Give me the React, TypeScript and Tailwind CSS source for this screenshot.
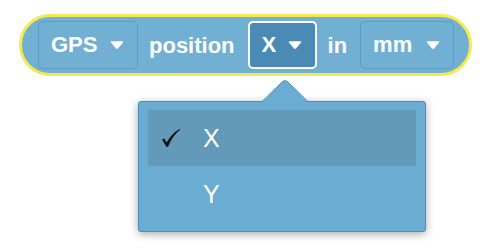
import React from 'react'

function Caret() {
  return (
    <svg width="14" height="8" viewBox="0 0 14 8" className="shrink-0">
      <path d="M1.5 1 L12.5 1 L7.8 6.6 Q7 7.4 6.2 6.6 Z" fill="white" stroke="white" strokeWidth={1.5} strokeLinejoin="round" />
    </svg>
  )
}

function Check() {
  return (
    <svg width="20" height="20" viewBox="0 0 20 20" className="shrink-0">
      <path
        d="M1.2 11.8 Q2.5 10.2 3.6 11 L5.6 14.6 Q10.5 5.5 18.6 0.9 L19.2 1.6 Q11.5 8 7.2 18.2 Q6.4 19.6 5.2 18.6 Z"
        fill="#111"
      />
    </svg>
  )
}

function Field({ label, selected, className }: { label: string; selected?: boolean; className: string }) {
  return (
    <div
      className={`flex h-[48px] items-center justify-between rounded-[5px] pl-[12px] pr-[13px] ${className} ${
        selected ? 'border-2 border-white bg-[#4a8ab4]' : 'border border-[#5f9cc4] bg-[#71afd3]'
      }`}
    >
      <span className="text-[22px] font-bold leading-none text-white">{label}</span>
      <Caret />
    </div>
  )
}

export default function App() {
  return (
    <div className="relative h-[250px] w-[494px] bg-white font-['Liberation_Sans',Arial,sans-serif]">
      {/* block */}
      <div className="absolute left-[19px] top-[14px] flex h-[62px] w-[453px] items-center rounded-full border-[3px] border-[#f6e84f] bg-[#71afd3] pl-[16px]">
        <Field label="GPS" className="w-[100px]" />
        <span className="ml-[11px] text-[22px] font-bold text-white">position</span>
        <Field label="X" selected className="ml-[13px] w-[69px]" />
        <span className="ml-[11px] text-[22px] font-bold text-white">in</span>
        <Field label="mm" className="ml-[13px] w-[94px]" />
      </div>

      {/* dropdown menu */}
      <div className="absolute left-[138px] top-[101px] h-[131px] w-[288px] rounded-[3px] border border-[#4f8db6] bg-[#6badd2] px-[9px] pt-[8px] shadow-[0_2px_8px_rgba(0,0,0,0.35)]">
        <div className="flex h-[56px] items-center bg-[#6399b9]">
          <span className="flex w-[55px] pl-[13px]">
            <Check />
          </span>
          <span className="text-[25px] leading-none text-white">X</span>
        </div>
        <div className="flex h-[56px] items-center">
          <span className="w-[55px]" />
          <span className="text-[25px] leading-none text-white">Y</span>
        </div>
      </div>
      <svg className="absolute left-[261px] top-[79px]" width="48" height="24" viewBox="0 0 48 24">
        <path d="M1 23 L21 3 Q24 0 27 3 L47 23 Z" fill="#6badd2" />
        <path d="M1 22.5 L21 3 Q24 0 27 3 L47 22.5" fill="none" stroke="#4f8db6" strokeWidth={1} />
      </svg>
    </div>
  )
}
